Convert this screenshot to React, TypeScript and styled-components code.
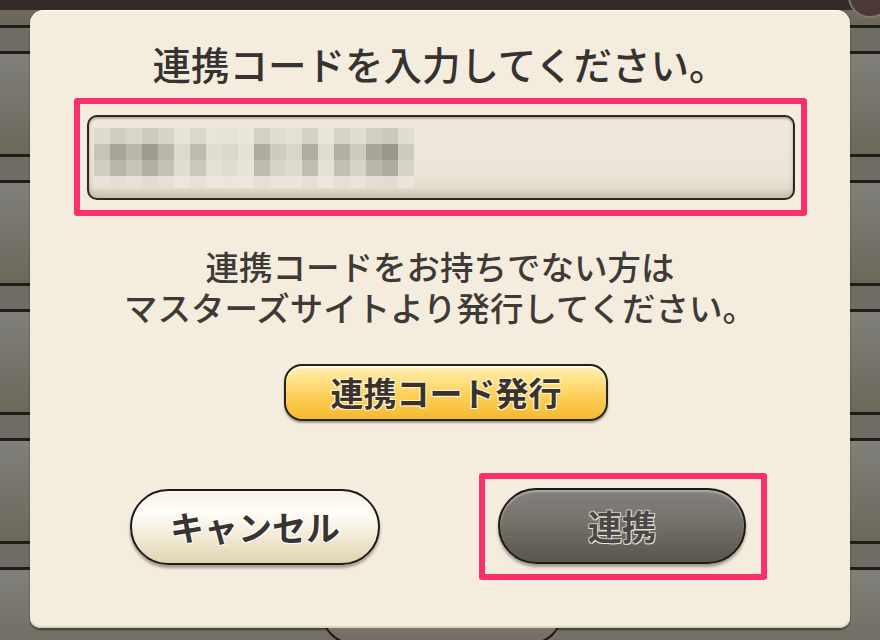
import styled, { createGlobalStyle } from 'styled-components';

const GlobalStyle = createGlobalStyle`
  body {
    margin: 0;
    background: #342b29;
    font-family: 'Noto Sans CJK JP', 'Noto Sans', sans-serif;
  }
`;

// gray levels of the blurred code, one per 16px column
const mosaicLevels = [200, 168, 188, 160, 186, 222, 192, 226, 220, 230, 176, 208, 218, 178, 226, 180, 208, 170, 155, 208];
const mosaicRows = [
  { y: 0, h: 16, mix: 0.6 },
  { y: 16, h: 16, mix: 0 },
  { y: 32, h: 16, mix: 0.25 },
  { y: 48, h: 12, mix: 0.85 },
];

const shade = (l: number, mix: number) => {
  const v = Math.round(l + (238 - l) * mix);
  return `rgb(${v}, ${v - 5}, ${v - 15})`;
};

const Mosaic = () => (
  <svg width="324" height="60" viewBox="0 0 324 60">
    {mosaicRows.map((row) =>
      mosaicLevels.map((l, i) => (
        <rect key={`${row.y}-${i}`} x={i * 16} y={row.y} width="16" height={row.h} fill={shade(l, row.mix)} />
      ))
    )}
  </svg>
);

export default function App() {
  return (
    <Screen>
      <GlobalStyle />
      <CloseKnob />
      <Dialog>
        <Title>連携コードを入力してください。</Title>
        <Highlight>
          <CodeField>
            <Mosaic />
          </CodeField>
        </Highlight>
        <Notice>
          <NoticeLine>連携コードをお持ちでない方は</NoticeLine>
          <NoticeLine>マスターズサイトより発行してください。</NoticeLine>
        </Notice>
        <IssueButton>連携コード発行</IssueButton>
        <Actions>
          <PillButton>キャンセル</PillButton>
          <Highlight $tight>
            <PillButton $dark>連携</PillButton>
          </Highlight>
        </Actions>
      </Dialog>
      <Footer>
        <HiddenButton />
      </Footer>
    </Screen>
  );
}

const Screen = styled.div`
  position: relative;
  width: 880px;
  height: 640px;
  overflow: hidden;
  display: flex;
  flex-direction: column;
  padding-top: 10px;
  box-sizing: border-box;
  background:
    linear-gradient(#342b29, #342b29) 0 0 / 100% 10px no-repeat,
    linear-gradient(
        180deg,
        #1f1d1a 0 3px,
        #807f7b 3px,
        #77746c 50px,
        #6c6759 103px,
        #1f1d1a 103px 106px,
        #6f6c63 106px 129px
      )
      0 51px / 100% 129px repeat-y,
    #757166;
`;

const CloseKnob = styled.div`
  position: absolute;
  top: -26px;
  right: -12px;
  width: 40px;
  height: 40px;
  border-radius: 50%;
  background: #4a3935;
  border: 2px solid #86756b;
`;

const Dialog = styled.div`
  flex: none;
  height: 618px;
  margin: 0 30px;
  box-sizing: border-box;
  background: #f4eddd;
  border-radius: 14px 14px 10px 10px;
  box-shadow: inset 0 1px 0 #ffffff, inset 0 -2px 0 #ddd3ba, 0 2px 2px rgba(0, 0, 0, 0.45);
  display: flex;
  flex-direction: column;
  align-items: center;
`;

const Title = styled.h1`
  margin: 31px 0 0;
  font-size: 38.5px;
  line-height: 44px;
  font-weight: 500;
  color: #363231;
`;

const Highlight = styled.div<{ $tight?: boolean }>`
  box-sizing: border-box;
  border: 6px solid #f9306c;
  border-radius: 3px;
  margin-top: ${(p) => (p.$tight ? 0 : 13)}px;
  width: ${(p) => (p.$tight ? 288 : 733)}px;
  height: ${(p) => (p.$tight ? 107 : 118)}px;
  padding: ${(p) => (p.$tight ? '9px 15px 10px 13px' : '11px 6px 10px 7px')};
  display: flex;
`;

const CodeField = styled.div`
  flex: 1;
  box-sizing: border-box;
  border: 2px solid #2a2826;
  border-radius: 10px;
  padding: 11px 5px;
  background: linear-gradient(#efe9dd, #ebe5d8 70%, #ddd5c3);
  box-shadow: inset 0 2px 2px rgba(0, 0, 0, 0.25), inset 0 -5px 5px rgba(140, 125, 95, 0.25);
  display: flex;
  align-items: flex-start;
`;

const Notice = styled.div`
  margin-top: 29px;
  display: flex;
  flex-direction: column;
  align-items: center;
  color: #3f3a37;
`;

const NoticeLine = styled.span`
  font-size: 33.5px;
  line-height: 41px;
  height: 41px;
  font-weight: 500;
  white-space: nowrap;
`;

const IssueButton = styled.button`
  margin: 37px 0 0 12px;
  width: 324px;
  height: 57px;
  box-sizing: border-box;
  border: 2px solid #2a2218;
  border-radius: 18px;
  background: linear-gradient(#fff0b8 0%, #ffe289 25%, #fdd05a 55%, #f6b930 100%);
  box-shadow: inset 0 2px 1px rgba(255, 255, 255, 0.8), 0 2px 2px rgba(0, 0, 0, 0.35);
  font-family: 'Noto Sans CJK JP', sans-serif;
  font-size: 33px;
  font-weight: 700;
  line-height: 1;
  color: #3a322b;
  text-shadow: 1px 1px 0 #fff6d8, -1px -1px 0 #fff6d8, 1px -1px 0 #fff6d8, -1px 1px 0 #fff6d8;
  padding: 0;
`;

const Actions = styled.div`
  align-self: stretch;
  margin-top: 52px;
  padding-left: 100px;
  display: flex;
  align-items: center;
  gap: 99px;
`;

const PillButton = styled.button<{ $dark?: boolean }>`
  width: ${(p) => (p.$dark ? 248 : 250)}px;
  height: 76px;
  flex: none;
  box-sizing: border-box;
  border: 2px solid #1f1a16;
  border-radius: 38px;
  padding: 0;
  background: ${(p) =>
    p.$dark
      ? 'linear-gradient(#83817c 0%, #77746e 40%, #66625a 75%, #5a564d 100%)'
      : 'linear-gradient(#f6f2e8 0%, #fffdf8 30%, #f1e9d4 65%, #e0d3b3 100%)'};
  box-shadow: inset 0 2px 2px rgba(255, 255, 255, 0.35), 0 3px 3px rgba(0, 0, 0, 0.35);
  font-family: 'Noto Sans CJK JP', sans-serif;
  font-size: 34px;
  font-weight: 700;
  line-height: 1;
  color: ${(p) => (p.$dark ? '#4b4844' : '#3a3431')};
  text-shadow: ${(p) =>
    p.$dark
      ? '1px 1px 0 #e8e5de, -1px -1px 0 #bdb9b1, 1px -1px 0 #d4d0c8, -1px 1px 0 #d4d0c8'
      : '1px 1px 0 #ffffff, -1px -1px 0 #ffffff, 1px -1px 0 #ffffff, -1px 1px 0 #ffffff'};
`;

const Footer = styled.div`
  flex: 1;
  overflow: hidden;
  display: flex;
  justify-content: center;
  padding-left: 4px;
`;

const HiddenButton = styled.div`
  width: 240px;
  height: 60px;
  margin-top: -44px;
  box-sizing: border-box;
  border: 2px solid #1d1a16;
  border-radius: 30px;
  background: linear-gradient(#908b80, #726c61);
`;
